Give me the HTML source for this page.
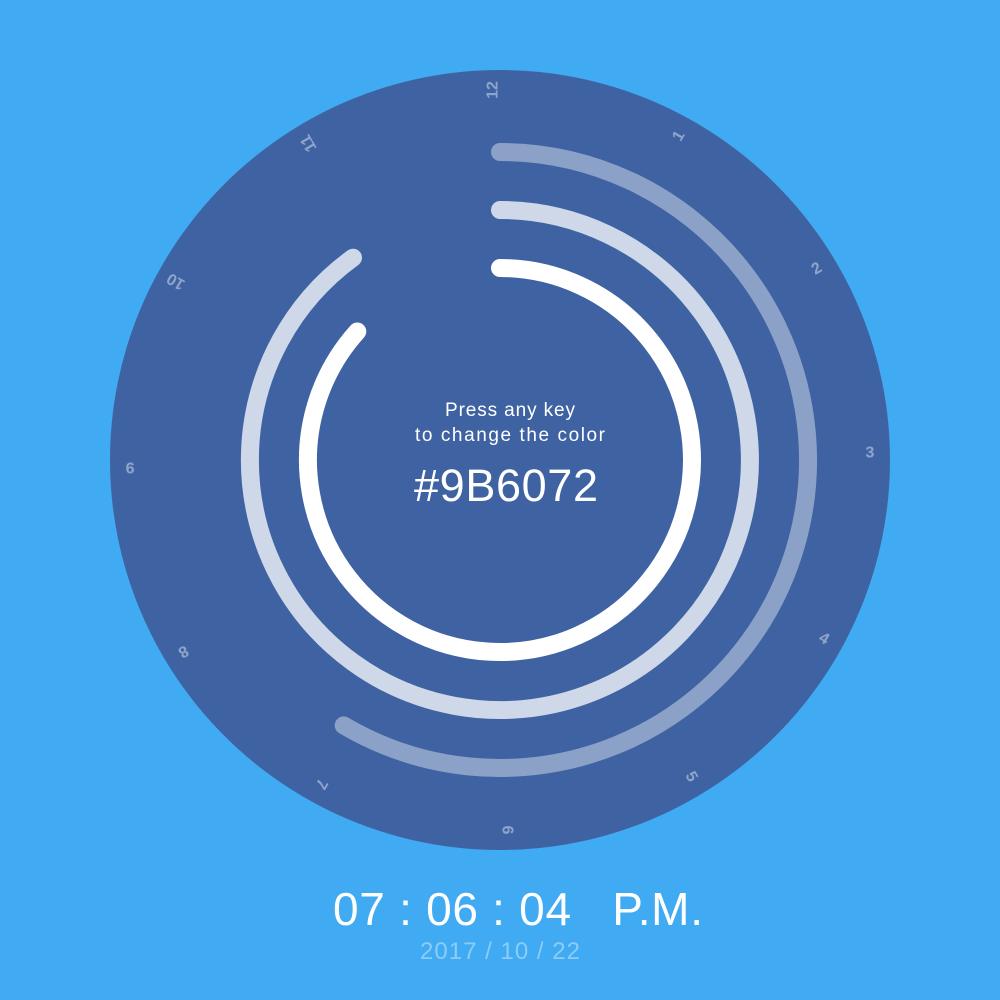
<!DOCTYPE html>
<html><head><meta charset="utf-8"><style>
html,body{margin:0;padding:0;width:1000px;height:1000px;background:#40aaf2;overflow:hidden;font-family:"Liberation Sans",sans-serif}
</style></head><body>
<svg width="1000" height="1000" viewBox="0 0 1000 1000" style="position:absolute;left:0;top:0">
<circle cx="500" cy="460" r="390" fill="#3f63a2"/>
<g fill="none" stroke-linecap="round" stroke-width="18">
<path d="M500 152 A308 308 0 1 1 343.7 725.4" stroke="rgba(255,255,255,0.4)"/>
<path d="M500 210 A250 250 0 1 1 353 257.7" stroke="rgba(255,255,255,0.75)"/>
<path d="M500 268 A192 192 0 1 1 357.3 331.5" stroke="#fff"/>
</g>
<g fill="rgba(255,255,255,0.42)" font-size="16" font-weight="bold" text-anchor="middle" dominant-baseline="central" font-family="Liberation Sans, sans-serif">
<text transform="translate(500,90) rotate(-90)" dy="-7">12</text>
<text transform="translate(685,139.6) rotate(-60)" dy="-7">1</text>
<text transform="translate(820.4,275) rotate(-30)" dy="-7">2</text>
<text transform="translate(870,460) rotate(0)" dy="-7">3</text>
<text transform="translate(820.4,645) rotate(30)" dy="-7">4</text>
<text transform="translate(685,780.4) rotate(60)" dy="-7">5</text>
<text transform="translate(500,830) rotate(90)" dy="-7">6</text>
<text transform="translate(315,780.4) rotate(120)" dy="-7">7</text>
<text transform="translate(179.6,645) rotate(150)" dy="-7">8</text>
<text transform="translate(130,460) rotate(180)" dy="-7">9</text>
<text transform="translate(179.6,275) rotate(210)" dy="-7">10</text>
<text transform="translate(315,139.6) rotate(240)" dy="-7">11</text>
</g>
<g fill="#fff" text-anchor="middle" font-family="Liberation Sans, sans-serif">
<text x="510" y="416" font-size="19" textLength="130">Press any key</text>
<text x="510" y="441" font-size="19" textLength="190">to change the color</text>
<text x="506" y="501" font-size="45" textLength="184">#9B6072</text>
<text x="518" y="925" font-size="46" textLength="370">07 : 06 : 04 &#160;&#160;P.M.</text>
<text x="500" y="959" font-size="24" textLength="160" fill="rgba(255,255,255,0.4)">2017 / 10 / 22</text>
</g>
</svg>
</body></html>
